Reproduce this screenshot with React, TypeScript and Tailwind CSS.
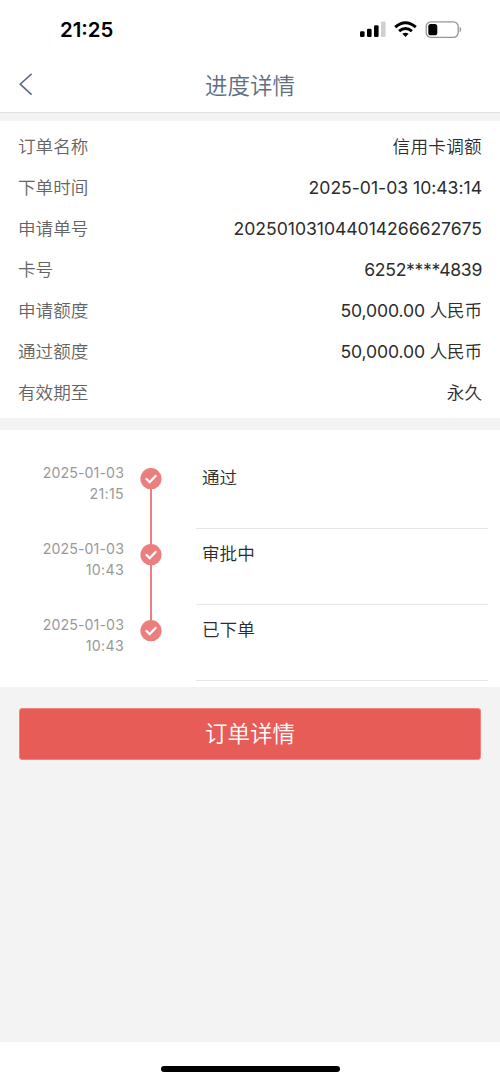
const details = [
  { label: '订单名称', unit: '信用卡调额', spacing: 'tracking-[0.3px]' },
  { label: '下单时间', number: '2025-01-03 10:43:14', spacing: 'tracking-[-0.02px]' },
  { label: '申请单号', number: '202501031044014266627675', spacing: 'tracking-[-0.04px]' },
  { label: '卡号', number: '6252****4839', spacing: 'tracking-[-0.32px]' },
  { label: '申请额度', number: '50,000.00', unit: '人民币', spacing: 'tracking-[-0.15px]' },
  { label: '通过额度', number: '50,000.00', unit: '人民币', spacing: 'tracking-[-0.15px]' },
  { label: '有效期至', unit: '永久', spacing: 'tracking-[0px]' },
];

const steps = [
  { date: '2025-01-03', time: '21:15', status: '通过' },
  { date: '2025-01-03', time: '10:43', status: '审批中' },
  { date: '2025-01-03', time: '10:43', status: '已下单' },
];

function StatusBar() {
  return (
    <div className="flex h-[58px] items-center justify-between pl-[60px] pr-[38px] pt-[2px]">
      <span className="text-[20.4px] font-semibold leading-none text-black">21:25</span>
      <svg width="103" height="18" viewBox="0 0 103 18">
        <rect x="1" y="10.3" width="4.6" height="5.7" rx="1.3" />
        <rect x="8" y="7.8" width="4.6" height="8.2" rx="1.3" />
        <rect x="15" y="4.3" width="4.6" height="11.7" rx="1.3" />
        <rect x="22" y="0.4" width="4.6" height="15.6" rx="1.3" fill="#d0d0d0" />
        <g fill="none" stroke="#000" strokeWidth="3">
          <path d="M36.2 6.2Q46.5-2.6 56.8 6.2" />
          <path d="M40.1 10.2Q46.5 4.8 52.9 10.2" />
        </g>
        <path d="M43.4 12.8Q46.5 10.5 49.6 12.8L46.5 16.1Z" />
        <rect x="67.2" y="0.8" width="32" height="15.6" rx="4.8" fill="#fff" stroke="#969696" strokeWidth="1.3" />
        <rect x="69.3" y="2.9" width="9" height="11.4" rx="2.6" />
        <path d="M101 6.3Q102.9 8.5 101 10.7Z" fill="#969696" stroke="#969696" strokeWidth="0.7" />
      </svg>
    </div>
  );
}

function CheckMark() {
  return (
    <svg className="relative" width="22" height="22" viewBox="0 0 22 22">
      <circle cx="11" cy="10.7" r="10.6" fill="#ec7e7e" />
      <path d="M6.5 11L9.7 14.1L15.6 7.9" fill="none" stroke="#fff" strokeWidth="2.2" strokeLinecap="round" />
    </svg>
  );
}

export default function App() {
  return (
    <div className="flex h-[1082px] w-[500px] flex-col bg-[#f3f3f3] font-['Inter','Noto_Sans_CJK_SC',sans-serif]">
      <header className="h-[113px] shrink-0 border-b border-[#e2e2e2] bg-white">
        <StatusBar />
        <div className="grid h-[54px] grid-cols-[80px_1fr_80px] items-center">
          <svg className="ml-[18px] -mt-[3px]" width="16" height="24" viewBox="0 0 16 24">
            <path d="M13.6 1.8L2.2 12.2L13.6 22.6" fill="none" stroke="#5d6d80" strokeWidth="1.6" />
          </svg>
          <h1 className="pt-[3px] text-center text-[22.5px] font-[350] leading-none text-[#5f6e80]">进度详情</h1>
        </div>
      </header>

      <dl className="mt-2 h-[297px] shrink-0 bg-white px-[18px] pt-[6px] text-[17.6px]">
        {details.map((item) => (
          <div key={item.label} className="flex h-[41px] items-center justify-between">
            <dt className="font-[350] text-[#646464]">{item.label}</dt>
            <dd className={`font-[350] text-[#2c2c2c] ${item.spacing}`}>
              {item.number && <span className="font-normal">{item.number}</span>}
              {item.number && item.unit && ' '}
              {item.unit}
            </dd>
          </div>
        ))}
      </dl>

      <ol className="mt-3 h-[257px] shrink-0 bg-white pt-[23px]">
        {steps.map((step, i) => (
          <li key={step.date + step.status} className="flex h-[76px]">
            <div className="w-[124px] pt-[9px] text-right text-[14.2px] font-normal leading-[21px] text-[#999]">
              <div className="tracking-[0.1px]">{step.date}</div>
              <div className="tracking-[0.3px]">{step.time}</div>
            </div>
            <div className="relative ml-4 w-[22px] pt-[15px]">
              {i < steps.length - 1 && (
                <div className="absolute left-[10px] top-[26px] h-[76px] w-[2px] bg-[#ec7e7e]" />
              )}
              <CheckMark />
            </div>
            <div className="ml-[34px] mr-3 flex-1 border-b border-[#e6e6e6] pl-[6px] pt-[12px] text-[17.6px] font-[350] leading-[26px] text-[#2c2c2c]">
              {step.status}
            </div>
          </li>
        ))}
      </ol>

      <main className="flex-1 px-[19px] pt-[21px]">
        <button className="block h-[52px] w-full rounded-[3px] border border-[#ee8580] bg-[#e75c57] pt-[1px] text-[22.5px] font-[350] leading-none text-white">
          订单详情
        </button>
      </main>

      <footer className="flex h-[40px] shrink-0 justify-center bg-white pt-[24px]">
        <div className="h-[6px] w-[179px] rounded-full bg-black" />
      </footer>
    </div>
  );
}
